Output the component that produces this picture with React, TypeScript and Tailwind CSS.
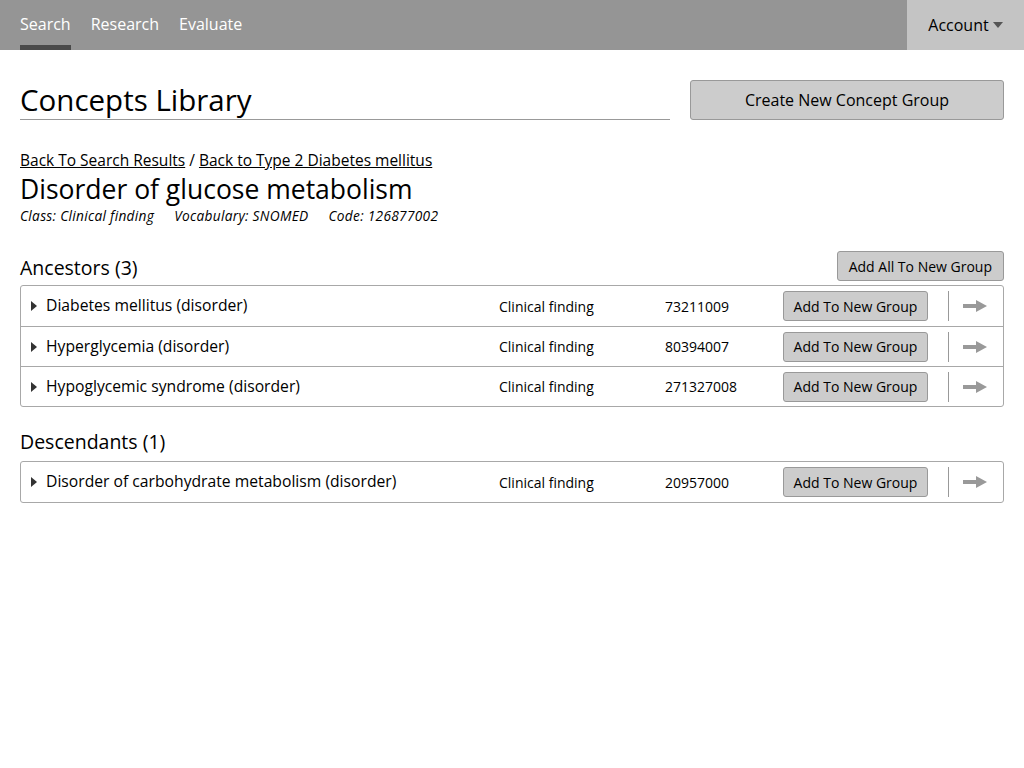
import { useState } from 'react';

type Concept = {
  name: string;
  cls: string;
  code: string;
};

const ANCESTORS: Concept[] = [
  { name: 'Diabetes mellitus (disorder)', cls: 'Clinical finding', code: '73211009' },
  { name: 'Hyperglycemia (disorder)', cls: 'Clinical finding', code: '80394007' },
  { name: 'Hypoglycemic syndrome (disorder)', cls: 'Clinical finding', code: '271327008' },
];

const DESCENDANTS: Concept[] = [
  { name: 'Disorder of carbohydrate metabolism (disorder)', cls: 'Clinical finding', code: '20957000' },
];

function Arrow() {
  return (
    <svg width="24" height="14" viewBox="0 0 24 14">
      <rect x="0" y="5" width="14" height="4" fill="#999999" />
      <polygon points="13,1 24,7 13,13" fill="#999999" />
    </svg>
  );
}

function ConceptRow({ concept }: { concept: Concept }) {
  return (
    <div className="flex items-center h-[40px] border-t border-[#a8a8a8] first:border-t-0">
      <div className="w-[25px] pl-[10px] flex items-center">
        <span className="block w-0 h-0 border-y-[5px] border-y-transparent border-l-[6px] border-l-[#333]" />
      </div>
      <div className="w-[453px] text-[15.7px] text-black">{concept.name}</div>
      <div className="w-[166px] text-[14px] text-black">{concept.cls}</div>
      <div className="w-[118px] text-[14px] text-black">{concept.code}</div>
      <button className="h-[30px] w-[145px] bg-[#cccccc] border border-[#999] rounded-[3px] text-[14px] text-black">
        Add To New Group
      </button>
      <div className="ml-[20px] h-[30px] w-px bg-[#999]" />
      <div className="ml-[14px] flex items-center">
        <Arrow />
      </div>
    </div>
  );
}

function ConceptTable({ items }: { items: Concept[] }) {
  return (
    <div className="border border-[#a8a8a8] rounded-[3px]">
      {items.map((c) => (
        <ConceptRow key={c.code} concept={c} />
      ))}
    </div>
  );
}

export default function App() {
  const [tab, setTab] = useState('Search');
  const tabs = ['Search', 'Research', 'Evaluate'];

  return (
    <div className="min-h-screen bg-white text-black" style={{ fontFamily: '"Open Sans", Lato, sans-serif' }}>
      <header className="h-[50px] bg-[#959595] flex">
        <nav className="flex flex-1 pl-[20px] gap-[20px]">
          {tabs.map((t) => (
            <button
              key={t}
              onClick={() => setTab(t)}
              className={`h-[50px] text-[16px] text-white pt-[2px] border-b-[5px] ${
                tab === t ? 'border-[#4a4a4a]' : 'border-transparent'
              }`}
            >
              {t}
            </button>
          ))}
        </nav>
        <div className="w-[117px] bg-[#c4c4c4] flex items-center justify-center gap-[4px] text-[16px]">
          Account
          <span className="block w-0 h-0 border-x-[5px] border-x-transparent border-t-[6px] border-t-[#555]" />
        </div>
      </header>

      <main className="px-[20px]">
        <div className="flex items-start gap-[20px] pt-[30px]">
          <h1 className="flex-1 text-[29.5px] leading-[40px] border-b border-[#999] h-[40px]">Concepts Library</h1>
          <button className="w-[314px] h-[40px] bg-[#cccccc] border border-[#999] rounded-[3px] text-[16px]">
            Create New Concept Group
          </button>
        </div>

        <div className="mt-[30px] text-[15.5px] leading-[20px]">
          <a className="underline">Back To Search Results</a> / <a className="underline">Back to Type 2 Diabetes mellitus</a>
        </div>
        <h2 className="text-[26.5px] leading-[38px]">Disorder of glucose metabolism</h2>
        <div className="text-[13.7px] italic leading-[16px] flex gap-[20px] tracking-[0.3px]">
          <span>Class: Clinical finding</span>
          <span>Vocabulary: SNOMED</span>
          <span>Code: 126877002</span>
        </div>

        <div className="mt-[27px] flex items-end justify-between mb-[4px]">
          <h3 className="text-[19.5px] leading-[26px]">Ancestors (3)</h3>
          <button className="h-[30px] px-[11px] bg-[#cccccc] border border-[#999] rounded-[3px] text-[14px]">
            Add All To New Group
          </button>
        </div>
        <ConceptTable items={ANCESTORS} />

        <h3 className="mt-[22px] mb-[6px] text-[19.5px] leading-[26px]">Descendants (1)</h3>
        <ConceptTable items={DESCENDANTS} />
      </main>
    </div>
  );
}
